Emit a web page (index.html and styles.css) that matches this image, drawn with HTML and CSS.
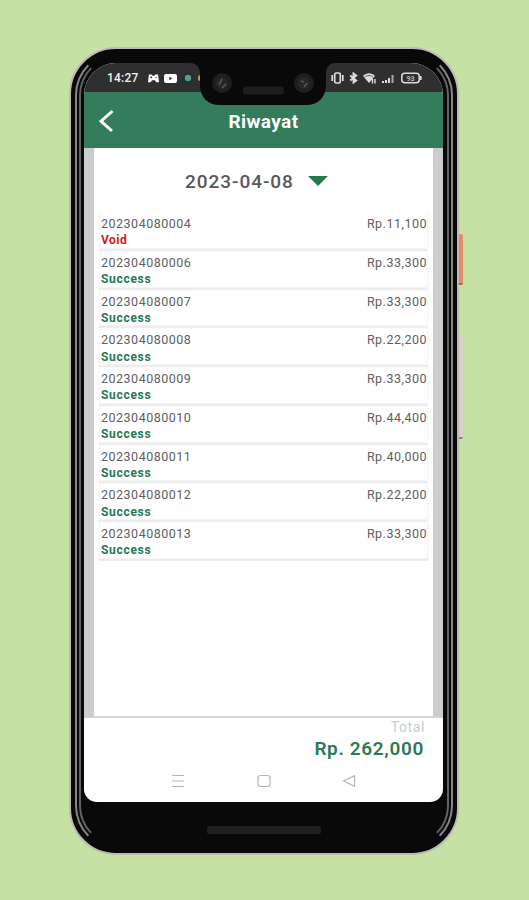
FILE: index.html
```
<!DOCTYPE html>
<html lang="id">
<head>
    <meta charset="UTF-8">
    <meta name="viewport" content="width=device-width, initial-scale=1.0">
    <title>Riwayat</title>
    <link rel="stylesheet" href="styles.css">
</head>
<body>
    <div class="phone">
        <div class="edge edge-outer"></div>
        <div class="edge edge-inner"></div>
        <div class="side-button power"></div>
        <div class="side-button volume"></div>

        <div class="screen">
            <!-- Status bar -->
            <div class="status-bar">
                <div class="status-left">
                    <span class="clock">14:27</span>
                    <svg class="icon-game" width="11" height="9" viewBox="0 0 12 9"><path d="M1 0h3l1 1.500h2L8 0h3l1 8.500H9L7.500 6.500h-3L3 8.500H0z" fill="#fff"/><path d="M2.500 3.300h2M3.500 2.300v2M8 3.300h1.500" stroke="#2f2f2f" stroke-width="1"/></svg>
                    <svg class="icon-video" width="13" height="9" viewBox="0 0 13 9"><rect width="13" height="9" rx="2" fill="#fff"/><path d="M5.300 2.700v3.600l3-1.800z" fill="#2f2f2f"/></svg>
                    <svg class="icon-dot" width="12" height="12" viewBox="0 0 12 12"><circle cx="6" cy="6" r="5.500" fill="#222b46"/><circle cx="6" cy="6" r="3.200" fill="#55a17c"/></svg>
                    <i class="dot-yellow"></i>
                </div>
                <div class="status-right">
                    <svg width="13" height="12" viewBox="0 0 13 12" fill="none" stroke="#ddd" stroke-width="1.700"><rect x="3.700" y="1" width="5.600" height="10" rx="1.500"/><path d="M1.200 3v6M11.800 3v6"/></svg>
                    <svg width="9" height="12" viewBox="0 0 9 12" fill="none" stroke="#ddd" stroke-width="1.900"><path d="M1.200 3.500l6 5L4.500 10.500V1.500l2.700 2-6 5"/></svg>
                    <svg width="14" height="12" viewBox="0 0 14 12"><path d="M0 4c3.500-3.600 8.500-3.600 12 0L6 11z" fill="#ddd"/><path d="M1.500 5.300c2.800-2.400 6.200-2.400 9 0" fill="none" stroke="#2f2f2f" stroke-width=".7"/><path d="M9.500 7v4.500M12 7v4.500" stroke="#ddd" stroke-width="1.400"/></svg>
                    <svg width="12" height="9" viewBox="0 0 12 9" stroke="#ddd" stroke-width="2"><path d="M1 9V7M4 9V6M7 9V4"/><path d="M10.500 9V1" stroke="#aaa"/></svg>
                    <svg class="icon-battery" width="21" height="12" viewBox="0 0 21 12"><rect x=".8" y="1.300" width="17.400" height="9.400" rx="3" fill="none" stroke="#ddd" stroke-width="1.500"/><path d="M19.700 4v4" stroke="#ddd" stroke-width="1.800"/><text x="9.500" y="8.600" text-anchor="middle" class="battery-text">93</text></svg>
                </div>
            </div>

            <!-- Header -->
            <header class="header">
                <svg class="back" width="16" height="24" viewBox="0 0 16 24"><path d="M13.500 2L2 12.200 13 22" fill="none" stroke="#fff" stroke-width="3"/></svg>
                <h1>Riwayat</h1>
            </header>

            <!-- Transaction history -->
            <main class="content">
                <div class="date-picker">
                    <span>2023-04-08</span>
                    <i class="caret"></i>
                </div>
                <ul class="list">
                    <li><div><p>202304080004</p><b class="void">Void</b></div><span>Rp.11,100</span></li>
                    <li><div><p>202304080006</p><b>Success</b></div><span>Rp.33,300</span></li>
                    <li><div><p>202304080007</p><b>Success</b></div><span>Rp.33,300</span></li>
                    <li><div><p>202304080008</p><b>Success</b></div><span>Rp.22,200</span></li>
                    <li><div><p>202304080009</p><b>Success</b></div><span>Rp.33,300</span></li>
                    <li><div><p>202304080010</p><b>Success</b></div><span>Rp.44,400</span></li>
                    <li><div><p>202304080011</p><b>Success</b></div><span>Rp.40,000</span></li>
                    <li><div><p>202304080012</p><b>Success</b></div><span>Rp.22,200</span></li>
                    <li><div><p>202304080013</p><b>Success</b></div><span>Rp.33,300</span></li>
                </ul>
            </main>

            <!-- Total -->
            <footer class="footer">
                <div class="total-label">Total</div>
                <div class="total">Rp. 262,000</div>
                <nav class="nav">
                    <svg width="14" height="14" viewBox="0 0 14 14"><path d="M1 1.500h12M1 7h12M1 12.500h12"/></svg>
                    <svg width="14" height="14" viewBox="0 0 14 14"><rect x="1" y="1.500" width="12" height="11" rx="2.500"/></svg>
                    <svg width="14" height="14" viewBox="0 0 14 14"><path d="M12.500 1.800v10.400L1.500 7z"/></svg>
                </nav>
            </footer>
        </div>

        <!-- Notch with both cameras and the earpiece -->
        <div class="notch">
            <svg width="150" height="56" viewBox="0 0 150 56">
                <path d="M0 13V0h150v13h-2c-7 0-10 4-10 11v10c0 14-8 21-20 21H32C20 55 12 48 12 34V24c0-7-3-11-10-11z" fill="#090909"/>
                <circle cx="34" cy="33" r="10" fill="#1c1e1f"/>
                <circle cx="34" cy="33" r="6" fill="#252829"/>
                <path d="M31 35l3-6M34 38l4-4" stroke="#55595b" stroke-width="1.500"/>
                <circle cx="116" cy="33" r="10" fill="#1c1e1f"/>
                <circle cx="116" cy="33" r="6" fill="#25282b"/>
                <path d="M113 31l3 1M116 37l3-4" stroke="#55595b" stroke-width="1.500"/>
                <rect x="55" y="36.500" width="41" height="8" rx="3" fill="#1d1d1d"/>
            </svg>
        </div>
        <div class="speaker"></div>
    </div>
</body>
</html>
```
FILE: styles.css
```
* {
    box-sizing: border-box;
}
body {
    margin: 0;
    height: 900px;
    padding: 47px 0 0 69px;
    background-color: #c5e1a3;
    font-family: Roboto, sans-serif;
    overflow: hidden;
}
h1, p, ul {
    margin: 0;
    padding: 0;
}
svg {
    display: block;
    flex: none;
}
.phone {
    position: relative;
    width: 390px;
    height: 808px;
    padding: 14px 14px 0 13px;
    border: 2px solid #bfb9b7;
    border-radius: 47px;
    background: #090909;
}
.edge {
    position: absolute;
    border-style: solid;
    border-color: transparent #858787;
    border-width: 2px;
    pointer-events: none;
}
.edge-outer {
    inset: 3px 4px 4px;
    border-radius: 43px;
}
.edge-inner {
    inset: 7px 8px 8px;
    border-color: transparent #626464;
    border-radius: 39px;
}
.side-button {
    position: absolute;
    left: 388px;
    width: 4px;
    border-radius: 0 2px 2px 0;
}
.power {
    top: 185px;
    height: 51px;
    background: #e58b67;
    border-bottom: 2px solid #a9694d;
}
.volume {
    top: 287px;
    height: 103px;
    background: #d9cfc8;
    border-bottom: 2px solid #8d8480;
}

/* Screen */
.screen {
    position: relative;
    display: flex;
    flex-direction: column;
    height: 739px;
    overflow: hidden;
    border-radius: 32px 32px 13px 13px;
    background: #fff;
}
.status-bar {
    display: flex;
    justify-content: space-between;
    height: 29px;
    padding: 1px 21px 0 23px;
    background: #2f2f2f;
}
.status-left, .status-right {
    display: flex;
    align-items: center;
}
.clock {
    width: 41px;
    color: #f2f2f2;
    font-size: 12px;
    font-weight: 500;
    letter-spacing: 0.2px;
}
.icon-video {
    margin: 0 5px;
}
.icon-dot {
    margin-right: 4px;
}
.dot-yellow {
    width: 5px;
    height: 6px;
    background: #b8a334;
    border-radius: 3px;
}
.status-right {
    gap: 5px;
}
.icon-battery {
    margin-left: 2px;
}
.battery-text {
    fill: #bbb;
    font-size: 7px;
    font-weight: 700;
}
.header {
    display: flex;
    align-items: center;
    height: 56px;
    padding: 2px 14px 0 15px;
    background: #347c5b;
    color: #fff;
}
.header h1 {
    flex: 1;
    padding-right: 17px;
    text-align: center;
    font-size: 19px;
    font-weight: 700;
    letter-spacing: 0.4px;
}
.content {
    height: 570px;
    padding: 0 5px;
    border-left: 10px solid #cccbce;
    border-right: 10px solid #cccbce;
    border-bottom: 2px solid #d5d5d6;
}
.date-picker {
    display: flex;
    align-items: center;
    gap: 14px;
    height: 64px;
    padding: 2px 0 0 86px;
    color: #58585a;
    font-size: 19px;
    font-weight: 500;
    letter-spacing: 0.95px;
}
.caret {
    border: 10px solid transparent;
    border-top: 10px solid #26784f;
    border-bottom: 0;
}
.list {
    list-style: none;
}
.list li {
    display: flex;
    justify-content: space-between;
    height: 36.75px;
    margin-bottom: 2px;
    padding: 3px 0 0 1px;
    border: 1px solid #f4f4f4;
    border-top: 0;
    box-shadow: 0 2px 1px #ededed;
    color: #606060;
    font-size: 12.5px;
    line-height: 17px;
    letter-spacing: 0.5px;
}
.list b {
    display: block;
    margin-top: 0.25px;
    color: #25794f;
    font-size: 12px;
    letter-spacing: 0.7px;
}
.list .void {
    color: #dc1717;
    letter-spacing: 0.5px;
}

/* Footer */
.footer {
    height: 84px;
    text-align: right;
}
.total-label {
    padding: 1px 18px 0 0;
    color: #c5cfcb;
    font-size: 14px;
    line-height: 17px;
    letter-spacing: 0.6px;
}
.total {
    padding-right: 19px;
    color: #2b7a53;
    font-size: 19px;
    font-weight: 600;
    line-height: 25px;
    letter-spacing: 0.65px;
}
.nav {
    display: flex;
    justify-content: space-between;
    padding: 13px 87px 0;
}
.nav svg {
    fill: none;
    stroke: #b5b5b5;
    stroke-width: 1.2;
}
.notch {
    position: absolute;
    top: 1px;
    left: 117px;
}
.speaker {
    width: 114px;
    height: 8px;
    margin: 24px auto 0;
    border-radius: 2px;
    background: #202020;
}
```
